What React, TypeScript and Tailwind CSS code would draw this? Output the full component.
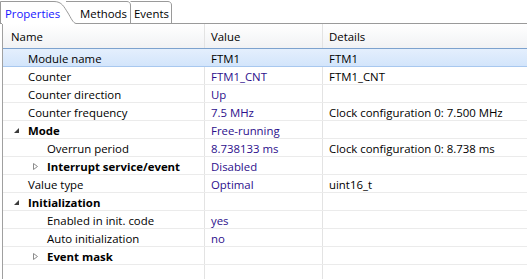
import React from "react";

type Row = {
  name: string;
  value?: string;
  details?: string;
  level: number;
  group?: "open" | "closed";
  selected?: boolean;
};

const rows: Row[] = [
  { name: "Module name", value: "FTM1", details: "FTM1", level: 0, selected: true },
  { name: "Counter", value: "FTM1_CNT", details: "FTM1_CNT", level: 0 },
  { name: "Counter direction", value: "Up", level: 0 },
  { name: "Counter frequency", value: "7.5 MHz", details: "Clock configuration 0: 7.500 MHz", level: 0 },
  { name: "Mode", value: "Free-running", level: 0, group: "open" },
  { name: "Overrun period", value: "8.738133 ms", details: "Clock configuration 0: 8.738 ms", level: 1 },
  { name: "Interrupt service/event", value: "Disabled", level: 1, group: "closed" },
  { name: "Value type", value: "Optimal", details: "uint16_t", level: 0 },
  { name: "Initialization", level: 0, group: "open" },
  { name: "Enabled in init. code", value: "yes", level: 1 },
  { name: "Auto initialization", value: "no", level: 1 },
  { name: "Event mask", level: 1, group: "closed" },
  { name: "", level: 0 },
];

function Twisty({ kind }: { kind?: "open" | "closed" }) {
  if (kind === "open") {
    return (
      <svg width="9" height="9" viewBox="0 0 9 9" className="shrink-0">
        <path d="M7 2 L7 7 L2 7 Z" fill="#3c3c3c" />
      </svg>
    );
  }
  if (kind === "closed") {
    return (
      <svg width="9" height="9" viewBox="0 0 9 9" className="shrink-0">
        <path d="M2.5 1.5 L6.5 4.5 L2.5 7.5 Z" fill="white" stroke="#8c8c8c" strokeWidth="1" />
      </svg>
    );
  }
  return <span className="w-[9px] shrink-0" />;
}

function TreeRow({ row }: { row: Row }) {
  const indent = row.level === 0 ? "pl-[9px]" : "pl-[28px]";
  return (
    <div
      className={
        "flex h-[18px] shrink-0 border-b " +
        (row.selected
          ? "bg-gradient-to-b from-[#e4effd] to-[#d3e5fb] border-[#a8c8ef] border-t border-t-[#7da2ce] -mt-px h-[19px]"
          : "border-[#ebebeb]")
      }
    >
      <div className={"flex items-center pt-[2px] w-[202px] shrink-0 " + indent + (row.selected ? "" : " border-r border-[#e3e3e3]")}>
        <Twisty kind={row.group} />
        <span className={"ml-[7px] whitespace-nowrap text-black " + (row.group ? "font-bold" : "")}>{row.name}</span>
      </div>
      <div className={"flex items-center pt-[2px] w-[118px] shrink-0 pl-[6px] text-[#2c0f8c] " + (row.selected ? "text-black" : "border-r border-[#e3e3e3]")}>
        {row.value}
      </div>
      <div className="flex items-center pt-[2px] flex-1 pl-[6px] text-black whitespace-nowrap">{row.details}</div>
    </div>
  );
}

export default function App() {
  return (
    <div
      className="w-[527px] h-[279px] bg-white overflow-hidden flex flex-col text-[11.4px] leading-none"
      style={{ fontFamily: '"Open Sans", "Liberation Sans", sans-serif' }}
    >
      <div className="relative h-[24px] shrink-0 flex items-center">
        <svg width="527" height="24" className="absolute left-0 top-0">
          <path d="M0.5 23 L0.5 1.5 L54 1.5 C62 1.5 64 7 68 13 C71 18 73 23 76 23.5 L527 23.5" fill="none" stroke="#9a9a9a" />
          <path d="M66 1.5 L127 1.5 C129 1.5 130.5 3 130.5 5 L130.5 23" fill="none" stroke="#9a9a9a" />
          <path d="M130.5 1.5 L168 1.5 C170 1.5 171.5 3 171.5 5 L171.5 23" fill="none" stroke="#9a9a9a" />
          <path d="M0 23.5 L2 23.5" stroke="#9a9a9a" />
        </svg>
        <span className="relative pl-[5px] pt-[3px] text-[#1515ff] w-[80px]">Properties</span>
        <span className="relative pt-[3px] w-[54px]">Methods</span>
        <span className="relative pt-[3px]">Events</span>
      </div>
      <div className="flex flex-1 min-h-0">
        <div className="w-[3px] shrink-0 border-r border-[#a0a0a0] bg-white" />
        <div className="flex-1 flex flex-col">
          <div className="flex h-[25px] shrink-0 bg-gradient-to-b from-white to-[#f1f2f4] border-b border-[#d5d5d5] text-black">
            <div className="flex items-center pt-[2px] w-[202px] pl-[8px] border-r border-[#e3e3e3]">Name</div>
            <div className="flex items-center pt-[2px] w-[118px] pl-[6px] border-r border-[#e3e3e3]">Value</div>
            <div className="flex items-center pt-[2px] flex-1 pl-[6px]">Details</div>
          </div>
          {rows.map((r, i) => (
            <TreeRow key={i} row={r} />
          ))}
        </div>
      </div>
    </div>
  );
}
